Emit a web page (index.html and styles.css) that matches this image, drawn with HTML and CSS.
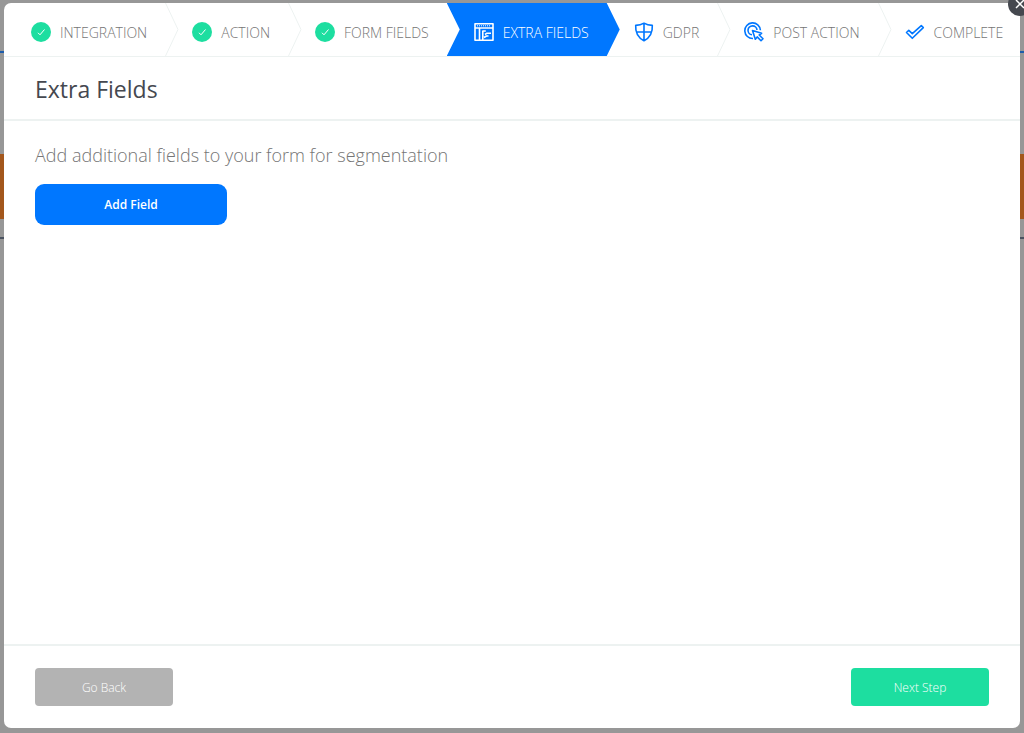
FILE: index.html
```html
<!DOCTYPE html>
<html lang="en">
<head>
  <meta charset="UTF-8" />
  <title>Extra Fields</title>
  <meta name="viewport" content="width=device-width, initial-scale=1.0" />
  <link rel="stylesheet" href="styles.css">
</head>

<body>

  <!-- dimmed page behind the modal -->
  <div class="backdrop">
    <div class="backdrop-nav"></div>
    <div class="backdrop-banner"></div>
    <div class="backdrop-line"></div>
  </div>

  <main class="modal">
    <button class="close-btn" aria-label="Close">
      <svg width="10" height="10" viewBox="0 0 10 10"><path d="M1 1l8 8M9 1L1 9" /></svg>
    </button>

    <!-- wizard steps -->
    <nav class="steps">
      <a class="step" href="#integration">
        <svg class="icon done" viewBox="0 0 20 20"><circle cx="10" cy="10" r="10" /><path d="M7 10.800l2 2 4.500-5.300" /></svg>
        INTEGRATION
        <svg class="chevron" viewBox="0 0 14 53"><path d="M.5 0L13 26.500 .5 53" /></svg>
      </a>
      <a class="step" href="#action">
        <svg class="icon done" viewBox="0 0 20 20"><circle cx="10" cy="10" r="10" /><path d="M7 10.800l2 2 4.500-5.300" /></svg>
        ACTION
        <svg class="chevron" viewBox="0 0 14 53"><path d="M.5 0L13 26.500 .5 53" /></svg>
      </a>
      <a class="step" href="#form-fields">
        <svg class="icon done" viewBox="0 0 20 20"><circle cx="10" cy="10" r="10" /><path d="M7 10.800l2 2 4.500-5.300" /></svg>
        FORM FIELDS
      </a>
      <a class="step active" href="#extra-fields" aria-current="step">
        <svg class="icon" viewBox="0 0 20 20">
          <path d="M1 1.700h18v16.600H1zM1 6h18M5.500 6v12.300M8.800 8.500v9.800M8.800 9h3M11 12.500l2-1.300h4M10 15.500l2.500-1.500h2" />
          <path class="dots" d="M3 3.800h14" />
        </svg>
        EXTRA FIELDS
      </a>
      <a class="step" href="#gdpr">
        <svg class="icon" viewBox="0 0 20 20"><path d="M10 1.200c2.500 1.600 5 2.200 8.300 2.200.5 7-1.800 12-8.300 15.400C3.500 15.400 1.200 10.400 1.700 3.400c3.300 0 5.800-.6 8.300-2.200zM10 1.200v17.600M2 10h16" /></svg>
        GDPR
        <svg class="chevron" viewBox="0 0 14 53"><path d="M.5 0L13 26.500 .5 53" /></svg>
      </a>
      <a class="step" href="#post-action">
        <svg class="icon" viewBox="0 0 20 20">
          <path d="M9 16.500A7.800 7.800 0 1 1 16.400 8.200M8 12.800A4.500 4.500 0 1 1 13 8" />
          <path d="M8.500 8.500l2.800 8.700 1.900-2.300 3.800 3.800 2-2-3.800-3.700 2.400-1.700z" />
        </svg>
        POST ACTION
        <svg class="chevron" viewBox="0 0 14 53"><path d="M.5 0L13 26.500 .5 53" /></svg>
      </a>
      <a class="step" href="#complete">
        <svg class="icon" viewBox="0 0 20 20"><path d="M1.500 10.500l2.300-2.200 3.500 3.300 9-8 2 2L7.300 16.300z" /></svg>
        COMPLETE
      </a>
    </nav>

    <header class="modal-header">
      <h1>Extra Fields</h1>
    </header>

    <section class="modal-body">
      <p>Add additional fields to your form for segmentation</p>
      <button class="btn btn-add">Add Field</button>
    </section>

    <footer class="modal-footer">
      <button class="btn btn-back">Go Back</button>
      <button class="btn btn-next">Next Step</button>
    </footer>
  </main>

</body>
</html>
```
FILE: styles.css
```css
* { margin: 0; padding: 0; box-sizing: border-box; }

body {
  min-height: 100vh;
  background-color: #979797;
  font-family: "Open Sans", sans-serif;
  display: flex;
  flex-direction: column;
  padding: 3px 4px 5px;
  overflow: hidden;
}

/* page behind the modal */
.backdrop {
  position: absolute;
  inset: 0;
  z-index: -1;
}
.backdrop-nav {
  height: 53px;
  border-bottom: 2px solid #1d5cab;
}
.backdrop-banner {
  height: 65px;
  margin-top: 101px;
  background-color: #a3571c;
}
.backdrop-line {
  height: 2px;
  margin-top: 18px;
  background-color: #4a5260;
}

.modal {
  position: relative;
  flex: 1;
  display: flex;
  flex-direction: column;
  background-color: #ffffff;
  border-radius: 7px;
}

.close-btn {
  position: absolute;
  top: -11px;
  right: -12px;
  z-index: 2;
  width: 24px;
  height: 24px;
  display: flex;
  align-items: center;
  justify-content: center;
  background-color: #45484f;
  border: none;
  border-radius: 50%;
  cursor: pointer;
}
.close-btn svg {
  fill: none;
  stroke: #ffffff;
  stroke-width: 1.5;
}

/* steps */
.steps {
  display: flex;
  border-bottom: 1px solid #edf2f1;
}
.step {
  position: relative;
  display: flex;
  align-items: center;
  gap: 9px;
  height: 53px;
  padding: 5px 18px 0 27px;
  color: #757575;
  font-size: 14px;
  font-weight: 300;
  text-decoration: none;
  white-space: nowrap;
}
.icon {
  width: 20px;
  height: 20px;
  fill: none;
  stroke: #0077ff;
  stroke-width: 1.6;
  stroke-linejoin: round;
}
.icon.done {
  stroke: #ffffff;
  stroke-width: 1;
}
.icon.done circle {
  fill: #1ddea0;
  stroke: none;
}
.icon .dots {
  stroke-width: 1;
  stroke-dasharray: 1 1;
}
.chevron {
  position: absolute;
  top: 0;
  right: -14px;
  width: 14px;
  height: 53px;
  fill: none;
  stroke: #edf2f1;
}

.step.active {
  color: #ffffff;
  padding-right: 31px;
  margin-right: -13px;
  background-color: #0077ff;
  clip-path: polygon(0 0, calc(100% - 13px) 0, 100% 50%, calc(100% - 13px) 100%, 0 100%, 13px 50%);
}
.step.active .icon { stroke: #ffffff; }

/* content */
.modal-header {
  padding: 16px 31px 13px;
  border-bottom: 2px solid #edf2f1;
}
.modal-header h1 {
  color: #45484f;
  font-size: 23px;
  line-height: 33px;
  font-weight: 400;
}
.modal-body {
  flex: 1;
  padding: 22px 31px;
}
.modal-body p {
  margin-bottom: 17px;
  color: #757575;
  font-size: 18px;
  line-height: 24px;
  font-weight: 300;
}

.btn {
  border: none;
  border-radius: 4px;
  color: #ffffff;
  font-family: inherit;
  font-size: 12px;
  font-weight: 300;
  cursor: pointer;
}
.btn-add {
  width: 192px;
  height: 41px;
  border-radius: 9px;
  background-color: #0077ff;
  font-weight: 600;
}
.modal-footer {
  display: flex;
  justify-content: space-between;
  padding: 22px 31px;
  border-top: 2px solid #edf2f1;
}
.btn-back,
.btn-next {
  width: 138px;
  height: 38px;
}
.btn-back { background-color: #b3b3b3; }
.btn-next { background-color: #1ddea0; }
```
